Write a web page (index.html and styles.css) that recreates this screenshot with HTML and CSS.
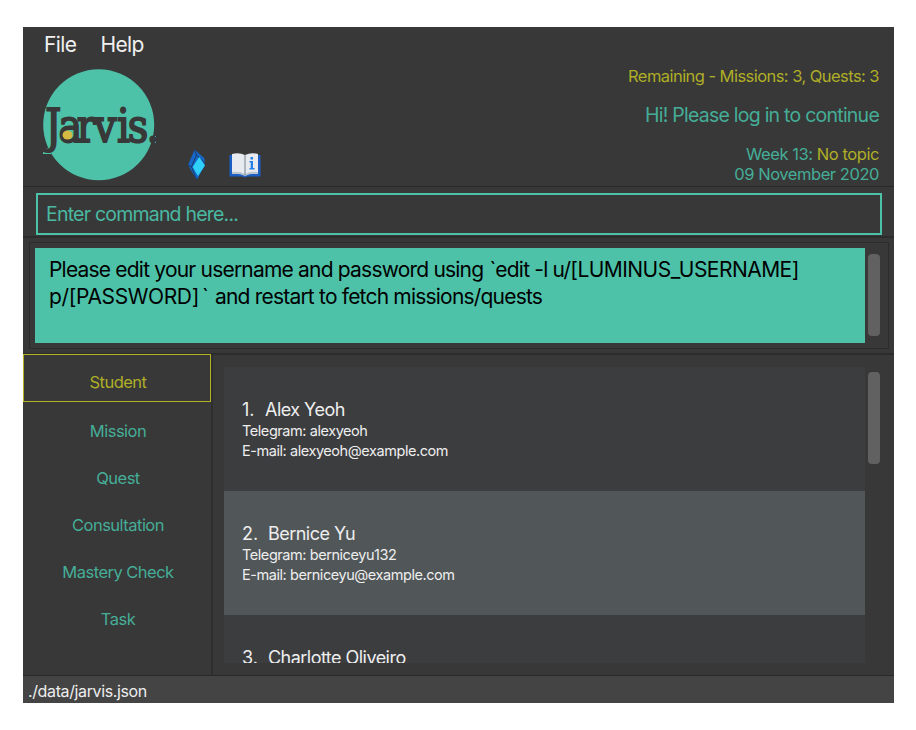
FILE: index.html
```
<!DOCTYPE html>
<html lang="en">
<head>
<meta charset="utf-8">
<title>Jarvis</title>
<link rel="stylesheet" href="styles.css">
</head>
<body>
<div class="window">
  <header class="header">
    <div class="header-left">
      <nav class="menu"><span>File</span><span>Help</span></nav>
      <div class="brand">
        <svg class="logo" width="116" height="114" viewBox="0 0 116 114">
          <circle cx="57.7" cy="56.7" r="55.5" fill="#4dc2a9"/>
          <path d="M2 80h8v6H2zM109 68h6v7h-6z" fill="#4dc2a9"/>
          <text transform="scale(.85 1)" x="5 20.500 42 62 89.500 102 124" y="74" class="logo-text">Jarvis.</text>
          <ellipse cx="26.500" cy="67" rx="5" ry="4.500" fill="#d4b942"/>
        </svg>
        <svg class="gem" width="18" height="32" viewBox="0 0 18 32">
          <path d="M6.700 .5 16.600 9.500 16.500 17 8.700 31 0 16z" fill="#1767c9"/>
          <path d="M6.700 .5 8.500 6 16.600 14M8.500 6 3.500 18 0 16M3.500 18 8.700 31" fill="none" stroke="#1b3555" stroke-width=".9"/>
          <path d="M11.300 8 16.900 16.500 10 27 4.700 18z" fill="#2fd0fa"/>
        </svg>
        <svg class="book" width="32" height="26" viewBox="0 0 32 26">
          <path d="M.5 3h31v21.500H19l-3 1-3-1H.5z" fill="#1b5fc4"/>
          <path d="M3 2Q10 0 16 3 22 0 29 2v20q-7-1-13 1-6-2-13-1z" fill="#e7ebef"/>
          <path d="M3 20q7-1 13 2 6-3 13-2v2q-7-1-13 2-6-3-13-2z" fill="#b9c3cc"/>
          <path d="M16 3v20" stroke="#75828e" stroke-width="1"/>
          <path d="M21.500 5H24v2.500h-2.500zM20.500 9H24v7h1.500v1.500h-5V16h1.200v-5.500h-1.200z" fill="#2680e8"/>
        </svg>
      </div>
    </div>
    <div class="header-right">
      <div class="remaining">Remaining - Missions: 3, Quests: 3</div>
      <div class="greeting">Hi! Please log in to continue</div>
      <div class="week">Week 13: <span class="topic">No topic</span></div>
      <div class="date">09 November 2020</div>
    </div>
  </header>
  <section class="command"><div class="command-box">Enter command here...</div></section>
  <section class="result">
    <div class="result-frame">
      <div class="result-text">Please edit your username and password using <span class="tick">`</span>edit -l u/<span class="placeholder">[LUMINUS_USERNAME]</span><br><span class="option">p/[PASSWORD]</span><span class="tick wide">`</span> and restart to fetch missions/quests</div>
      <div class="thumb result-thumb"></div>
    </div>
  </section>
  <main class="main">
    <nav class="tabs">
      <div class="tab active">Student</div>
      <div class="tab">Mission</div>
      <div class="tab">Quest</div>
      <div class="tab">Consultation</div>
      <div class="tab">Mastery Check</div>
      <div class="tab">Task</div>
    </nav>
    <div class="content">
      <div class="list">
        <article class="card"><h2><span class="num">1.</span><span>Alex Yeoh</span></h2><p>Telegram: alexyeoh</p><p>E-mail: alexyeoh@example.com</p></article>
        <article class="card alt"><h2><span class="num num-wide">2.</span><span>Bernice Yu</span></h2><p>Telegram: berniceyu132</p><p>E-mail: berniceyu@example.com</p></article>
        <article class="card"><h2><span class="num num-wide">3.</span><span>Charlotte Oliveiro</span></h2></article>
      </div>
      <div class="thumb list-thumb"></div>
    </div>
  </main>
  <footer class="status">./data/jarvis.json</footer>
</div>
</body>
</html>
```
FILE: styles.css
```
* { box-sizing: border-box; }
body { margin: 0; background: #fff; font-family: Inter, "Liberation Sans", sans-serif; }
.window { display: flex; flex-direction: column; width: 871px; height: 676px; margin: 27px 0 0 23px; background: #383838; overflow: hidden; }
.header { display: flex; justify-content: space-between; height: 160px; border-bottom: 1px solid #292929; }
.menu { display: flex; gap: 24px; padding: 4px 0 0 21px; font-size: 21px; letter-spacing: -0.6px; line-height: 27px; height: 30px; color: #f0f0f0; }
.brand { display: flex; align-items: flex-end; height: 127px; padding-left: 18px; }
.logo { margin-bottom: 2px; overflow: visible; }
.logo-text { font-family: "DejaVu Serif", serif; font-size: 47px; fill: #383838; stroke: #383838; stroke-width: 2px; }
.gem { margin: 0 0 3px 31px; }
.book { margin: 0 0 6px 23px; }
.header-right { padding: 39px 15px 0 0; text-align: right; color: #45ad97; white-space: nowrap; }
.remaining { font-size: 16.5px; letter-spacing: -0.55px; line-height: 20px; color: #afae27; }
.greeting { margin-top: 16px; font-size: 19.5px; letter-spacing: -0.76px; line-height: 26px; }
.week { margin-top: 16px; font-size: 16.5px; letter-spacing: -0.43px; line-height: 20px; }
.topic { color: #afae27; }
.date { font-size: 16.5px; letter-spacing: -0.44px; line-height: 20px; }
.command { height: 51px; padding: 6px 12px 2px 13px; border-bottom: 2px solid #2c2c2c; }
.command-box { height: 42px; padding: 0 8px; border: 2px solid #4dc2a9; font-size: 19.5px; letter-spacing: -0.79px; line-height: 39px; color: #4ab9a2; }
.result { height: 117px; padding: 4px 5px 5px 6px; border-bottom: 2px solid #2c2c2c; }
.result-frame { display: flex; height: 107px; padding: 5px; border: 1px solid #2c2c2c; }
.result-text { width: 830px; height: 95px; padding: 8px 14px; background: #4dc2a9; font-size: 21px; letter-spacing: -0.8px; line-height: 27px; color: #000; white-space: nowrap; }
.placeholder { letter-spacing: -0.54px; }
.option { letter-spacing: -0.38px; }
.tick { margin: 0 0 0 1px; }
.wide { margin: 0 2px 0 3px; }
.thumb { width: 12px; margin-left: 3px; border-radius: 4px; background: #616161; }
.result-thumb { height: 82px; margin-top: 6px; }
.main { display: flex; height: 321px; border-bottom: 1px solid #292929; }
.tabs { width: 190px; border-right: 2px solid #2e2e2e; }
.tab { display: flex; align-items: center; justify-content: center; width: 188px; height: 47px; padding-left: 2px; font-size: 16.5px; letter-spacing: -0.52px; color: #45ad97; }
.active { height: 48px; margin: -1px 0 5px; border: 1px solid #b5b224; color: #afae27; padding-top: 8px; }
.content { display: flex; padding: 12px 0 0 11px; }
.list { width: 641px; height: 296px; overflow: hidden; }
.card { height: 124px; padding: 32px 18px 0; background: #3c3d3f; color: #eee; }
.alt { background: #515658; }
h2 { display: flex; margin: 0; font-size: 18px; font-weight: 400; letter-spacing: -0.53px; line-height: 22px; }
.num { width: 23px; letter-spacing: 0; }
.num-wide { width: 26px; }
p { margin: 0; font-size: 14.5px; letter-spacing: -0.44px; line-height: 20px; }
.list-thumb { height: 92px; margin-top: 5px; }
.status { height: 27px; padding-left: 5px; background: #444; color: #eee; font-size: 16px; letter-spacing: -0.38px; line-height: 30px; }
```
